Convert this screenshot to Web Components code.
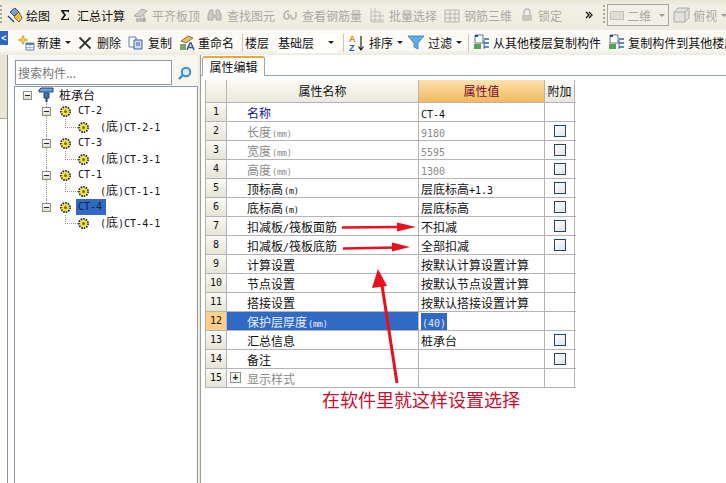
<!DOCTYPE html>
<html lang="zh">
<head>
<meta charset="utf-8">
<title>属性编辑</title>
<style>
html, body { margin: 0; height: 100%; overflow: hidden; background: #fff; }
body { font: 12px "Noto Sans CJK SC", "Liberation Sans", sans-serif; color: #111; }
</style>
</head>
<body>
<app-shell>
  <tool-bar slot="bar1" kind="top">
    <bar-grip></bar-grip>
    <tool-btn icon="draw" w="17" g="2" m="5">绘图</tool-btn>
    <tool-btn icon="sigma" w="10" g="7" m="10">汇总计算</tool-btn>
    <tool-btn icon="align" w="15" g="4" m="8" off>平齐板顶</tool-btn>
    <tool-btn icon="find" w="15" g="5" m="7" off>查找图元</tool-btn>
    <tool-btn icon="view" w="14" g="5" m="8" off>查看钢筋量</tool-btn>
    <tool-btn icon="batch" w="15" g="4" m="8" off>批量选择</tool-btn>
    <tool-btn icon="grid3" w="16" g="4" m="7" off>钢筋三维</tool-btn>
    <tool-btn icon="lock" w="14" g="4" m="8" off>锁定</tool-btn>
    <tool-btn icon="more" w="8" g="0" m="23"></tool-btn>
    <bar-grip style="margin-left:10px"></bar-grip>
    <combo-box flat off style="margin-left:2px;width:62px" swatch>二维</combo-box>
    <tool-btn icon="cube" w="17" g="3" m="4" off caret>俯视</tool-btn>
  </tool-bar>
  <tool-bar slot="bar2" kind="sub">
    <tool-btn icon="add" w="17" g="2" m="18" caret>新建</tool-btn>
    <tool-btn icon="cross" w="14" g="5" m="7">删除</tool-btn>
    <tool-btn icon="copy" w="15" g="5" m="7">复制</tool-btn>
    <tool-btn icon="rename" w="16" g="3" m="7">重命名</tool-btn>
    <bar-sep style="margin-left:8px"></bar-sep>
    <tool-btn w="0" g="0" m="2">楼层</tool-btn>
    <combo-box style="margin-left:8px;width:60px">基础层</combo-box>
    <bar-sep style="margin-left:6px"></bar-sep>
    <tool-btn icon="sort" w="18" g="3" m="4" caret>排序</tool-btn>
    <tool-btn icon="filter" w="16" g="4" m="5" caret>过滤</tool-btn>
    <bar-sep style="margin-left:6px"></bar-sep>
    <tool-btn icon="floors" w="17" g="3" m="4">从其他楼层复制构件</tool-btn>
    <tool-btn icon="floors" w="17" g="3" m="7">复制构件到其他楼层</tool-btn>
  </tool-bar>

  <side-rail slot="rail"></side-rail>

  <search-box slot="search">搜索构件...</search-box>

  <tree-panel slot="tree">
    <tree-node root icon="pile" label="桩承台">
      <tree-node icon="gear" label="CT-2"><tree-node leaf last icon="gear" label="(底)CT-2-1"></tree-node></tree-node>
      <tree-node icon="gear" label="CT-3"><tree-node leaf last icon="gear" label="(底)CT-3-1"></tree-node></tree-node>
      <tree-node icon="gear" label="CT-1"><tree-node leaf last icon="gear" label="(底)CT-1-1"></tree-node></tree-node>
      <tree-node last selected icon="gear" label="CT-4"><tree-node leaf last icon="gear" label="(底)CT-4-1"></tree-node></tree-node>
    </tree-node>
  </tree-panel>

  <tab-strip slot="tabs">属性编辑</tab-strip>

  <prop-table slot="table">
    <prop-row head><span slot="name">属性名称</span><span slot="value">属性值</span><span slot="extra">附加</span></prop-row>
    <prop-row n="1" tone="link"><span slot="name">名称</span><span slot="value"><la-t>CT-4</la-t></span></prop-row>
    <prop-row n="2" tone="grey" check><span slot="name">长度<la-t small>(mm)</la-t></span><span slot="value"><la-t>9180</la-t></span></prop-row>
    <prop-row n="3" tone="grey" check><span slot="name">宽度<la-t small>(mm)</la-t></span><span slot="value"><la-t>5595</la-t></span></prop-row>
    <prop-row n="4" tone="grey" check><span slot="name">高度<la-t small>(mm)</la-t></span><span slot="value"><la-t>1300</la-t></span></prop-row>
    <prop-row n="5" check><span slot="name">顶标高<la-t small>(m)</la-t></span><span slot="value">层底标高<la-t>+1.3</la-t></span></prop-row>
    <prop-row n="6" check><span slot="name">底标高<la-t small>(m)</la-t></span><span slot="value">层底标高</span></prop-row>
    <prop-row n="7" check><span slot="name">扣减板<la-t>/</la-t>筏板面筋</span><span slot="value">不扣减</span></prop-row>
    <prop-row n="8" check><span slot="name">扣减板<la-t>/</la-t>筏板底筋</span><span slot="value">全部扣减</span></prop-row>
    <prop-row n="9"><span slot="name">计算设置</span><span slot="value">按默认计算设置计算</span></prop-row>
    <prop-row n="10"><span slot="name">节点设置</span><span slot="value">按默认节点设置计算</span></prop-row>
    <prop-row n="11"><span slot="name">搭接设置</span><span slot="value">按默认搭接设置计算</span></prop-row>
    <prop-row n="12" active><span slot="name">保护层厚度<la-t small>(mm)</la-t></span><span slot="value"><la-t>(40)</la-t></span></prop-row>
    <prop-row n="13" check><span slot="name">汇总信息</span><span slot="value">桩承台</span></prop-row>
    <prop-row n="14" check><span slot="name">备注</span></prop-row>
    <prop-row n="15" tone="grey" plus><span slot="name">显示样式</span></prop-row>
  </prop-table>

  <red-notes slot="notes">在软件里就这样设置选择</red-notes>
</app-shell>

<script>
const ICONS = {
  draw: `<svg viewBox="0 0 17 17"><path d="M3 5l5-4 4 4-5 4z" fill="#7d9bd0" stroke="#34518c"/><path d="M7 10l5-5 3 6-3 4z" fill="#e8c24a" stroke="#8a6b1c"/><path d="M1 9l6 6" stroke="#2c4a8a" stroke-width="1.4"/></svg>`,
  sigma: `<svg viewBox="0 0 10 12"><path d="M1 1h8v3L8 2.500H3.500L6 6 3 10h5l1-2v3H1v-1l3-4-3-4z" fill="#111"/></svg>`,
  align: `<svg viewBox="0 0 15 16"><path d="M1 9l8-7 5 2-6 6z" fill="#cfcfc8" stroke="#aaa"/><path d="M3 11h10v4H3z" fill="#bdbdb5"/><path d="M11 8v7" stroke="#999"/></svg>`,
  find: `<svg viewBox="0 0 15 14"><path d="M1 7l2-5h3v5h3V2h3l2 5v5H9V9H6v3H1z" fill="#c9c9c1" stroke="#aaa"/></svg>`,
  view: `<svg viewBox="0 0 14 12"><path d="M6 2C3 2 1 4 1 7s2 3 3 3 2-1 2-3-1-2-2-2M8 6c0 3 1 4 2 4s3-1 3-3V3" fill="none" stroke="#b2b2aa" stroke-width="1.500"/></svg>`,
  batch: `<svg viewBox="0 0 15 16"><path d="M1 1v14h13M1 5h9M1 9h13M1 13h13M5 1v14M10 5v10" fill="none" stroke="#bbb"/></svg>`,
  grid3: `<svg viewBox="0 0 16 15"><path d="M1 2h14v12H1zM1 6h14M1 10h14M6 2v12M11 2v12" fill="none" stroke="#b5b5ad"/></svg>`,
  lock: `<svg viewBox="0 0 14 14"><path d="M4 7V4a3 3 0 016 0v3" fill="none" stroke="#bbb" stroke-width="1.400"/><path d="M2 7h10v6H2z" fill="#c8c8c0"/></svg>`,
  more: `<svg viewBox="0 0 8 8"><path d="M1 1l3 3-3 3M4 1l3 3-3 3" fill="none" stroke="#111" stroke-width="1.300"/></svg>`,
  cube: `<svg viewBox="0 0 17 16"><path d="M1 5l4-4h11v10l-4 4H1z" fill="#e2e2da" stroke="#aaa"/><path d="M1 5h11v10M12 5l4-4" fill="none" stroke="#aaa"/></svg>`,
  add: `<svg viewBox="0 0 17 16"><path d="M1 4h3V1h2v3h3v2H6v3H4V6H1z" fill="#f5d24a" stroke="#b8942a" stroke-width=".6"/><path d="M8 8h8v7H8z" fill="#fff" stroke="#5b82b5"/><path d="M8 8h8v2H8z" fill="#5b82b5"/><path d="M8 12.500h8M12 10v5" stroke="#9db5d2"/></svg>`,
  cross: `<svg viewBox="0 0 14 14"><path d="M1.500 1.500l11 11M12.500 1.500l-11 11" stroke="#333" stroke-width="1.800"/></svg>`,
  copy: `<svg viewBox="0 0 15 14"><path d="M1 1h7v10H1z" fill="#fff" stroke="#5f7fa8"/><path d="M6 4h8v9H6z" fill="#cfe0f5" stroke="#34609c"/><path d="M8 7h4M8 9h4" stroke="#34609c"/></svg>`,
  rename: `<svg viewBox="0 0 16 16"><path d="M2 6l7-5 5 2-7 5z" fill="#e3c062" stroke="#92702a"/><path d="M1 9h6v6H1z" fill="#7fa36b"/><path d="M8 15l3-7h1l3 7M9.500 12.500h4" fill="none" stroke="#2f55a0" stroke-width="1.500"/></svg>`,
  sort: `<svg viewBox="0 0 18 18"><text x="1" y="8" font-family="Liberation Sans" font-size="9" font-weight="700" fill="#c58a1a">A</text><text x="1" y="17" font-family="Liberation Sans" font-size="9" font-weight="700" fill="#2c5aa8">Z</text><path d="M13 2v13M10.500 12.500L13 16l2.500-3.500" fill="none" stroke="#222" stroke-width="1.200"/></svg>`,
  filter: `<svg viewBox="0 0 16 15"><path d="M0 1h16L10 8v6l-4-2V8z" fill="#5fb0e8" stroke="#2f78b5" stroke-width=".8"/></svg>`,
  floors: `<svg viewBox="0 0 17 17"><path d="M2 1h8v8H2z" fill="#fff" stroke="#5d7390"/><path d="M2 1h3v2H2z" fill="#2c4a8a"/><path d="M1 10h7v5H1z" fill="#54a454"/><path d="M11 4h5v2h-5zM11 8h5v2h-5zM11 12h5v2h-5z" fill="#5c8ccb"/><path d="M11 6v9" stroke="#34609c"/></svg>`,
  pile: `<svg viewBox="0 0 16 16"><path d="M1 3l2-2h12v4H3L1 5z" fill="#6f9fd8" stroke="#1f3f6f"/><path d="M6 6h5v5H6z" fill="#3a76bd" stroke="#1f3f6f"/><path d="M7.500 11h2v4h-2z" fill="#1f3f6f"/></svg>`,
  gear: `<svg viewBox="0 0 11 11"><circle cx="5.500" cy="5.500" r="3.600" fill="#f5e61c"/><circle cx="5.500" cy="5.500" r="4.600" fill="none" stroke="#1a1a10" stroke-width="1.700" stroke-dasharray="1.600 1"/><circle cx="5.500" cy="5.500" r="1.500" fill="#7a6612"/></svg>`
};

function define(name, css, html) {
  customElements.define(name, class extends HTMLElement {
    constructor() {
      super();
      this.attachShadow({mode: "open"});
      this.shadowRoot.innerHTML = `<style>${css}</style>${typeof html === "function" ? html(this) : html}`;
    }
    connectedCallback() {
      if (this.hasAttribute("m")) this.style.marginLeft = this.getAttribute("m") + "px";
    }
  });
}

class AppShell extends HTMLElement {
  constructor() {
    super();
    this.shadowDOM = this.attachShadow({mode: "open"});
    this.shadowDOM.innerHTML = `
    <style>
      :host { display: block; position: relative; width: 726px; height: 483px; overflow: hidden; }
      .body { display: flex; height: 428px; }
      .left { width: 184px; margin-left: 6px; flex: none; display: flex; flex-direction: column; box-sizing: border-box; }
      .right { flex: 1; min-width: 0; margin-left: 2px; border-left: 1px solid #9c9c94; box-shadow: -2px 0 0 #eeebdd; }
    </style>
    <slot name="bar1"></slot>
    <slot name="bar2"></slot>
    <div class="body">
      <slot name="rail"></slot>
      <div class="left"><slot name="search"></slot><slot name="tree"></slot></div>
      <div class="right"><slot name="tabs"></slot><slot name="table"></slot></div>
    </div>
    <slot name="notes"></slot>`;
  }
}
customElements.define("app-shell", AppShell);

define("tool-bar", `
  :host { display: flex; align-items: center; white-space: nowrap; overflow: hidden; width: 726px; }
  :host([kind=top]) { height: 30px; background: linear-gradient(#e9e6d6, #f2f0e4 20%, #efecdf); }
  :host([kind=sub]) { height: 25px; background: linear-gradient(#fbfaf5, #fdfcf8 70%, #ecebe0); }
`, `<slot></slot>`);

define("bar-grip", `
  :host { display: block; width: 2px; height: 20px; flex: none; background: repeating-linear-gradient(#a9a795 0 2px, transparent 2px 4px); }
`, ``);

define("bar-sep", `
  :host { display: block; width: 1px; height: 18px; flex: none; background: #c9c7b8; }
`, ``);

define("tool-btn", `
  :host { display: inline-flex; align-items: center; flex: none; height: 20px; color: #111; }
  :host([off]) { color: #a9a9a2; }
  .ic { display: flex; justify-content: center; flex: none; }
  svg { width: 100%; display: block; }
  .caret { width: 0; height: 0; margin-left: 4px; border: 3px solid transparent; border-top: 3px solid #222; border-bottom: 0; }
  :host([off]) .caret { border-top-color: #999; }
`, el => {
  const w = el.getAttribute("w"), g = el.getAttribute("g");
  const ic = el.getAttribute("icon");
  return `<span class="ic" style="width:${w}px;margin-right:${g}px">${ic ? ICONS[ic] : ""}</span><slot></slot>${el.hasAttribute("caret") ? `<span class="caret"></span>` : ""}`;
});

define("combo-box", `
  :host { display: flex; align-items: center; flex: none; height: 20px; box-sizing: border-box; color: #111; background: #fffffb; padding-left: 1px; }
  :host([flat]) { border: 1px solid #a9a99f; color: #a9a9a2; background: #f2f0e6; height: 22px; }
  .sw { width: 14px; height: 9px; margin: 0 3px 0 1px; background: #deded4; border: 1px solid #c3c3b8; box-sizing: border-box; }
  .caret { margin-left: auto; margin-right: 3px; border: 3px solid transparent; border-top: 3px solid #222; border-bottom: 0; }
  :host([flat]) .caret { border-top-color: #999; }
`, el => `${el.hasAttribute("swatch") ? `<span class="sw"></span>` : ""}<slot></slot><span class="caret"></span>`);

// the blue collapse chip hangs over the second toolbar
define("side-rail", `
  :host { display: block; position: relative; width: 8px; flex: none; box-sizing: border-box; border-right: 1px solid #8f8f86; }
  .chip { position: absolute; left: 0; top: -24px; width: 8px; height: 14px; background: #2f68c4; color: #fff; font: 700 9px/14px "Liberation Sans", sans-serif; text-align: center; }
  .rest { height: 64px; background: #e9e6d6; border-bottom: 1px solid #aaa99c; box-sizing: border-box; }
`, `<div class="chip">&lt;</div><div class="rest"></div>`);

define("search-box", `
  :host { display: flex; height: 31px; padding: 5px 0 0 1px; box-sizing: border-box; background: #f7f6ef; }
  .input { width: 157px; height: 25px; box-sizing: border-box; border: 1px solid #8b9aa8; background: #fff; color: #777; line-height: 23px; padding-left: 2px; }
  .go { width: 25px; display: flex; align-items: center; justify-content: center; }
  svg { width: 15px; height: 15px; }
`, `<div class="input"><slot></slot></div><div class="go"><svg viewBox="0 0 15 15"><circle cx="9" cy="6" r="4.200" fill="#d9eefb" stroke="#3c8ccc" stroke-width="2"/><path d="M5.500 9.500L2 13" stroke="#3c8ccc" stroke-width="2.400"/></svg></div>`);

define("tree-panel", `
  :host { display: block; flex: 1; box-sizing: border-box; background: #fff; border: 1px solid #8b9aa8; border-bottom: 0; padding: 0 0 0 8px; }
`, `<slot></slot>`);

define("tree-node", `
  :host { display: block; position: relative; }
  :host(:not([root])) { margin-left: 19px; }
  :host(:not([root]))::before { content: ""; position: absolute; left: 4px; top: 0; bottom: 0; border-left: 1px dotted #9a9a90; }
  :host([last]:not([leaf]))::before { bottom: auto; height: 8px; }
  :host([leaf][last])::before { bottom: auto; height: 9px; }
  :host([leaf])::after { content: ""; position: absolute; left: 4px; top: 8px; width: 13px; border-top: 1px dotted #9a9a90; }
  .row { display: flex; align-items: center; height: 16px; position: relative; white-space: nowrap; }
  .exp { width: 9px; height: 9px; box-sizing: border-box; border: 1px solid #8f8f86; background: linear-gradient(#fff, #dcdcd0); position: relative; flex: none; z-index: 1; }
  .exp::after { content: ""; position: absolute; left: 1px; right: 1px; top: 3px; height: 1px; background: #222; }
  .ic { width: 11px; height: 11px; margin-left: 9px; flex: none; position: relative; }
  svg { display: block; width: 100%; height: 100%; }
  :host([root]) .ic { width: 16px; height: 16px; margin-left: 6px; }
  :host([leaf]) .exp { visibility: hidden; }
  :host([leaf]) .ic { margin-left: 8px; }
  .txt { margin-left: 5px; padding: 0 2px; font: 10px/16px "DejaVu Sans Mono", "Noto Sans CJK SC", monospace; }
  :host([root]) .txt { margin-left: 3px; font: 12px/16px "Noto Sans CJK SC", sans-serif; }
  :host([leaf]) .txt { margin-left: 9px; }
  .cjk { font: 12px/16px "Noto Sans CJK SC", sans-serif; }
  :host([selected]) .row .txt { background: #316ac5; color: #10203c; width: 26px; }
`, el => {
  const label = el.getAttribute("label").replace("底", `<span class="cjk">底</span>`);
  return `<div class="row"><span class="exp"></span><span class="ic">${ICONS[el.getAttribute("icon")]}</span><span class="txt">${label}</span></div><div class="kids"><slot></slot></div>`;
});

define("tab-strip", `
  :host { display: flex; align-items: flex-end; height: 21px; padding-left: 1px; box-sizing: border-box; background: #fff; border-bottom: 1px solid #8fa5b2; }
  .tab { height: 20px; width: 63px; box-sizing: border-box; margin-bottom: -1px; background: #fff; border: 1px solid #9aa7ae; border-top: 2px solid #eaa83c; border-bottom: 0; border-radius: 3px 3px 0 0; text-align: center; line-height: 18px; }
`, `<div class="tab"><slot></slot></div>`);

define("prop-table", `
  :host { display: block; width: 370px; margin: 4px 0 0 4px; border-left: 1px solid #b2b2b2; }
`, `<slot></slot>`);

define("prop-row", `
  :host { display: grid; grid-template-columns: 21px 191px 127px 30px; height: 19px; box-sizing: border-box; line-height: 19px; border-bottom: 1px solid #b4b4b8; }
  :host([head]) { height: 23px; line-height: 22px; }
  div { box-sizing: border-box; border-right: 1px solid #b4b4b8; overflow: hidden; white-space: nowrap; }
  .n { background: linear-gradient(#faf9f3, #e6e4d6); text-align: center; font: 10px/18px "DejaVu Sans Mono", monospace; }
  .name { padding-left: 20px; border-right: 0; display: flex; }
  .value { padding-left: 2px; border-left: 1px solid #b4b4b8; }
  .extra { display: flex; align-items: center; justify-content: center; }
  .box { width: 12px; height: 12px; box-sizing: border-box; border: 1px solid #26475f; background: linear-gradient(135deg, #fff, #dfe3e6); }
  .plus { width: 11px; height: 11px; box-sizing: border-box; border: 1px solid #8f8f86; background: #f4f4ee; position: absolute; margin: 3px 0 0 -17px; font: 700 10px/9px "Liberation Sans", sans-serif; text-align: center; color: #222; }
  :host([head]) .n, :host([head]) .name { background: linear-gradient(#fbfaf5, #ebe9dc); }
  :host([head]) .name { justify-content: center; padding-left: 0; line-height: 22px; }
  :host([head]) .value { background: linear-gradient(#fbe2ae, #f2b95c); color: #7a0a2c; text-align: center; padding-left: 0; }
  :host([head]) .extra { background: linear-gradient(#fbfaf5, #e9e7da); }
  :host([tone=link]) .name { color: #10109a; }
  :host([tone=grey]) .name, :host([tone=grey]) .value { color: #8a8a8a; }
  :host([active]) .n { background: #ffcf8c; }
  :host([active]) .name { background: #316ac5; color: #e6eefc; }
  :host([active]) .value ::slotted(span) { background: #316ac5; color: #dfe9fb; padding: 0 1px; }
`, el => {
  const head = el.hasAttribute("head");
  const extra = head ? `<slot name="extra"></slot>` : el.hasAttribute("check") ? `<span class="box"></span>` : "";
  return `<div class="n">${el.getAttribute("n") || ""}</div><div class="name">${el.hasAttribute("plus") ? `<span class="plus">+</span>` : ""}<slot name="name"></slot></div><div class="value"><slot name="value"></slot></div><div class="extra">${extra}</div>`;
});

define("la-t", `
  :host { font: 10px "DejaVu Sans Mono", monospace; }
  :host([small]) { font-size: 8.500px; letter-spacing: -.2px; margin-left: 1px; }
`, `<slot></slot>`);

// the arrows and the caption were painted over the screenshot, so they sit on top
define("red-notes", `
  :host { position: absolute; left: 0; top: 0; width: 726px; height: 483px; pointer-events: none; }
  svg { position: absolute; left: 0; top: 0; }
  .cap { position: absolute; left: 322px; top: 386px; font: 18px/26px "Noto Sans CJK SC", sans-serif; color: #c8102e; white-space: nowrap; }
`, `<svg width="726" height="483" viewBox="0 0 726 483">
    <path d="M342 227.500L400 227" stroke="#e8101c" stroke-width="2.500"/>
    <path d="M416 227L397 222.500V231.500z" fill="#e8101c"/>
    <path d="M343 248.500L396 247.500" stroke="#e8101c" stroke-width="2.500"/>
    <path d="M410 247L392 242.500V251.500z" fill="#e8101c"/>
    <path d="M397 383L382 285" stroke="#e8101c" stroke-width="3"/>
    <path d="M378 269L372 288L387 286z" fill="#e8101c"/>
  </svg><div class="cap"><slot></slot></div>`);
</script>
</body>
</html>
